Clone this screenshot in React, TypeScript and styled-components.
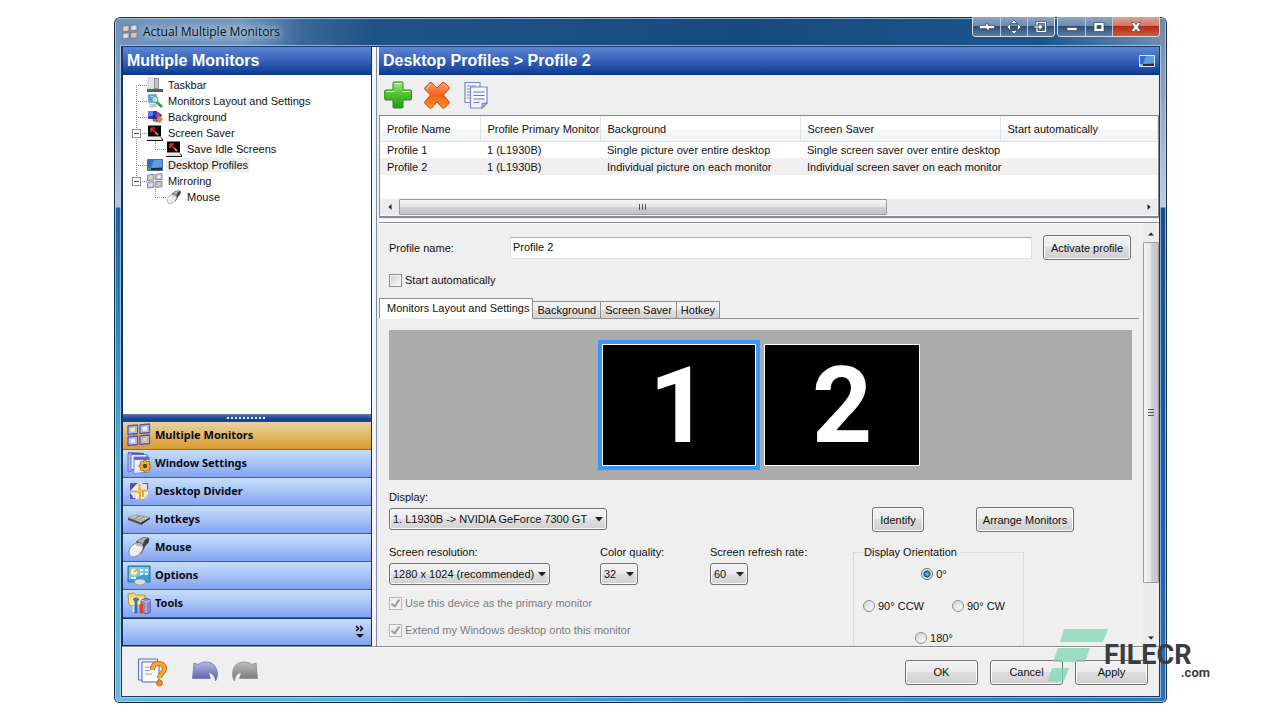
import React, { useState } from "react";
import styled, { createGlobalStyle, css } from "styled-components";

const GlobalStyle = createGlobalStyle`
  *, *::before, *::after { box-sizing: border-box; }
  body {
    margin: 0;
    background: #fff;
    color: #111;
    font: 11px/14px "Liberation Sans", Arial, sans-serif;
  }
  button, input, select { font: inherit; color: inherit; margin: 0; }
`;

const Page = styled.div`
  display: flex;
  height: 100vh;
  padding: 17px 113px 17px 114px;
`;

/* ---------- window frame ---------- */

const Window = styled.div`
  position: relative;
  flex: 1;
  min-width: 0;
  display: flex;
  flex-direction: column;
  padding: 0 7px 6px;
  border-radius: 6px 6px 5px 5px;
  box-shadow: inset 0 0 0 1px #12304f, inset 0 0 0 2px rgba(190, 220, 240, 0.7);
  background:
    linear-gradient(to bottom, #6e8fb5 0, #b5c6d8 190px, #1d64a4 191px, #2f83ba 300px, #4fadd0 440px, #6db9da 100%) left / 7px 100% no-repeat,
    linear-gradient(to bottom, #6e87a5 0, #c0cedd 190px, #174f8c 191px, #1f5f9f 500px, #2e70b0 100%) right / 7px 100% no-repeat,
    linear-gradient(to right, #6db9da 0, #58b2d8 25%, #4394cc 50%, #2f78bc 100%) bottom / 100% 7px no-repeat,
    linear-gradient(to right, #6f92b8 0, #7396bb 130px, #3a6798 190px, #1f5288 260px, #174a80 60%, #1c548c 88%, #7390af 100%);
`;

const TitleBar = styled.header`
  display: flex;
  align-items: flex-start;
  height: 29px;
  padding-left: 1px;
`;

const WindowTitle = styled.h1`
  flex: 1;
  display: flex;
  align-items: center;
  gap: 5px;
  margin: 0;
  padding-top: 6px;
  font: 12px/18px "Open Sans", sans-serif;
  color: #0a1420;
  text-shadow: 0 0 6px #b9cde2, 0 0 8px #b9cde2, 0 0 10px #b9cde2;
`;

const CaptionGroup = styled.div`
  display: flex;
  height: 20px;
  margin-right: 2px;
  border: 1px solid #d3deea;
  border-top: 0;
  border-radius: 0 0 4px 4px;
  overflow: hidden;
  &:last-child { margin-right: 0; }
`;

const CaptionButton = styled.button<{ $close?: boolean }>`
  display: grid;
  place-items: center;
  width: ${(p) => (p.$close ? 47 : 27)}px;
  padding: 0;
  border: 0;
  border-left: 1px solid #b9c8d9;
  background: ${(p) =>
    p.$close
      ? "linear-gradient(#dba596 0, #cf7868 45%, #b32c17 50%, #cf5a3b 100%)"
      : "linear-gradient(#8ea6c1 0, #6f8cad 45%, #2e5078 50%, #5c7fa6 100%)"};
  &:first-child { border-left: 0; }
`;

const Client = styled.div`
  flex: 1;
  min-height: 0;
  display: flex;
  flex-direction: column;
  border: 1px solid #17386b;
  box-shadow: 0 0 0 1px rgba(190, 212, 235, 0.7);
  background: #efefef;
`;

const Body = styled.div`
  flex: 1;
  min-height: 0;
  display: flex;
  border-bottom: 1px solid #8a8a8a;
`;

const PanelHeader = styled.div`
  flex: none;
  display: flex;
  align-items: center;
  justify-content: space-between;
  height: 28px;
  padding: 0 4px;
  border-bottom: 1px solid #0d3379;
  background: linear-gradient(#5c86d3 0, #3a66bb 45%, #17449c 90%, #0d3a90 100%);
`;

const PanelTitle = styled.h2`
  margin: 0;
  font: bold 16px/20px "Liberation Sans", Arial, sans-serif;
  color: #fff;
`;

/* ---------- sidebar ---------- */

const Sidebar = styled.aside`
  flex: none;
  display: flex;
  flex-direction: column;
  width: 250px;
  border: solid #14306c;
  border-width: 0 1px 0 1px;
  background: #fff;
`;

const Tree = styled.ul`
  flex: 1;
  margin: 0;
  padding: 2px 0 0;
  list-style: none;
`;

const TreeRow = styled.li`
  display: flex;
  align-items: center;
  height: 16px;
`;

const TreeLabel = styled.span<{ $selected?: boolean }>`
  margin-left: 3px;
  padding: 0 2px;
  background: ${(p) => (p.$selected ? "#efefef" : "transparent")};
`;

const Splitter = styled.div`
  display: grid;
  place-items: center;
  height: 8px;
  border-bottom: 1px solid #0b5a55;
  background: linear-gradient(#6876ad, #1b4a9a 60%, #103f8d);
`;

const navRow = css`
  display: flex;
  align-items: center;
  height: 28px;
  background: linear-gradient(#c8def9 0, #a9c6f6 45%, #84a2f1 100%);
`;

const NavButton = styled.button<{ $active: boolean }>`
  ${navRow}
  gap: 4px;
  width: 100%;
  padding: 0 0 1px 4px;
  border: 0;
  border-bottom: 1px solid #1b7672;
  font: bold 11px/16px "Noto Sans", sans-serif;
  text-align: left;
  color: #0a0a14;
  ${(p) =>
    p.$active &&
    css`
      background: linear-gradient(#e9d3a2 0, #e2b767 50%, #dc9a31 100%);
      border-bottom-color: #4a8f1c;
    `}
`;

const NavOverflow = styled.div`
  ${navRow}
  justify-content: flex-end;
  padding-right: 6px;
  border-top: 1px solid #14306c;
  border-bottom: 1px solid #14306c;
`;

const IconButton = styled.button`
  display: grid;
  place-items: center;
  padding: 0;
  border: 0;
  background: none;
`;

/* ---------- main panel ---------- */

const Main = styled.main`
  flex: 1;
  min-width: 0;
  display: flex;
  flex-direction: column;
  margin-left: 4px;
  border-left: 1px solid #7c8aa5;
  padding-left: 2px;
  box-shadow: -4px 0 0 #f7f5f3;
`;

const Toolbar = styled.div`
  flex: none;
  display: flex;
  align-items: center;
  gap: 11px;
  height: 40px;
  padding-left: 5px;
`;

const ListBox = styled.section`
  flex: none;
  border: 1px solid #868b92;
  border-bottom-width: 2px;
  background: #fff;
`;

const TableArea = styled.div`
  height: 82px;
`;

const Table = styled.table`
  width: 100%;
  table-layout: fixed;
  border-collapse: collapse;
`;

const HeadCell = styled.th<{ $width?: number }>`
  width: ${(p) => (p.$width ? `${p.$width}px` : "auto")};
  height: 25px;
  padding: 1px 0 0 7px;
  border: solid #e0e3e8;
  border-width: 0 1px 1px 0;
  background: linear-gradient(#fff 50%, #f6f7f9 55%, #f3f4f6);
  font-weight: normal;
  text-align: left;
  white-space: nowrap;
`;

const Row = styled.tr<{ $selected?: boolean }>`
  background: ${(p) => (p.$selected ? "#f0f0f0" : "#fff")};
`;

const Cell = styled.td`
  height: 17px;
  padding: 0 0 0 7px;
  white-space: nowrap;
`;

const HScroll = styled.div`
  display: flex;
  height: 18px;
  border-top: 1px solid #f8f8f8;
  border-bottom: 1px solid #f8f8f8;
  background: #ececec;
`;

const ScrollEnd = styled.span<{ $vertical?: boolean }>`
  flex: none;
  display: grid;
  place-items: center;
  width: ${(p) => (p.$vertical ? 16 : 19)}px;
  height: 16px;
`;

const Track = styled.div<{ $vertical?: boolean }>`
  flex: 1;
  display: flex;
  flex-direction: ${(p) => (p.$vertical ? "column" : "row")};
`;

const Thumb = styled.div<{ $size: number; $vertical?: boolean }>`
  flex: 0 0 ${(p) => p.$size}%;
  display: grid;
  place-items: center;
  border: 1px solid #9a9a9a;
  border-radius: 1px;
  background: linear-gradient(
    ${(p) => (p.$vertical ? "to right" : "to bottom")},
    #f4f4f4 0, #e6e6e8 45%, #cfcfd2 55%, #c2c2c6 100%
  );
`;

const FormPanel = styled.section`
  flex: 1;
  min-height: 0;
  display: flex;
  margin-top: 4px;
  border-top: 1px solid #8f9296;
  box-shadow: 0 -3px 0 #fbfbfb, inset 0 1px 0 #fafafa;
  overflow: hidden;
`;

const Form = styled.form`
  flex: 1;
  min-width: 0;
  padding: 12px 4px 0 0;
`;

const VScroll = styled.div`
  flex: none;
  display: flex;
  flex-direction: column;
  width: 16px;
  padding: 3px 0 0;
  background: #ececec;
`;

const NameRow = styled.div`
  display: flex;
  align-items: center;
  padding: 0 8px 0 10px;
`;

const NameLabel = styled.label`
  width: 121px;
`;

const NameInput = styled.input`
  flex: 1;
  min-width: 0;
  height: 22px;
  margin-right: 11px;
  padding: 0 2px 1px;
  border: 1px solid #e2e3ea;
  border-top-color: #abadb3;
  background: #fff;
`;

const PushButton = styled.button<{ $width: number }>`
  width: ${(p) => p.$width}px;
  height: 25px;
  padding: 0;
  border: 1px solid #707070;
  border-radius: 3px;
  box-shadow: inset 0 0 0 1px #fcfcfc;
  background: linear-gradient(#f2f2f2 0, #ebebeb 48%, #dddddd 50%, #cfcfcf 100%);
  white-space: nowrap;
`;

const CheckLabel = styled.label<{ $muted?: boolean }>`
  display: flex;
  align-items: center;
  gap: 3px;
  height: 14px;
  color: ${(p) => (p.$muted ? "#7d7d7d" : "inherit")};
`;

const CheckBox = styled.input`
  appearance: none;
  display: grid;
  place-items: center;
  width: 13px;
  height: 13px;
  border: 1px solid #8e8f8f;
  background: linear-gradient(135deg, #cfd2d6, #f6f6f6);
  box-shadow: inset 0 0 0 1px #f4f4f4;
  &:disabled {
    border-color: #b4b4b4;
    background: #f0f0f0;
  }
  &:checked::after {
    content: "";
    width: 5px;
    height: 9px;
    margin-bottom: 2px;
    border: solid #9c9c9c;
    border-width: 0 2px 2px 0;
    transform: rotate(35deg);
  }
`;

const StartRow = styled.div`
  padding: 13px 0 0 10px;
`;

const TabBar = styled.div`
  display: flex;
  align-items: flex-end;
  height: 21px;
  margin-top: 11px;
  box-shadow: inset 0 -1px 0 #8c8e91;
`;

const Tab = styled.button<{ $active: boolean }>`
  height: ${(p) => (p.$active ? 21 : 18)}px;
  padding: ${(p) => (p.$active ? "0 3px 1px 7px" : "0 4px")};
  border: 1px solid #8c8e91;
  border-left-width: ${(p) => (p.$active ? 1 : 0)}px;
  border-bottom-color: ${(p) => (p.$active ? "#fff" : "#8c8e91")};
  background: ${(p) => (p.$active ? "#fff" : "linear-gradient(#f0f0f0 45%, #dcdcdc 55%, #d2d2d2)")};
  white-space: nowrap;
`;

const Canvas = styled.div`
  display: flex;
  justify-content: center;
  align-items: center;
  gap: 4px;
  height: 150px;
  margin: 11px 7px 0 10px;
  padding-right: 3px;
  background: #ababab;
`;

const MonitorTile = styled.button<{ $active: boolean }>`
  display: grid;
  place-items: center;
  width: ${(p) => (p.$active ? 162 : 156)}px;
  height: ${(p) => (p.$active ? 130 : 122)}px;
  padding: 3px 0 0;
  border: ${(p) => (p.$active ? "4px solid #3399ff" : "0 solid")};
  background: #000;
  box-shadow: inset 0 0 0 1px #fff;
  font: bold 105px/119px Roboto, Arial, sans-serif;
  color: #fff;
`;

const Settings = styled.div`
  display: grid;
  grid-template-columns: 211px 110px 143px 1fr;
  grid-template-rows: auto auto auto auto 1fr;
  align-items: start;
  padding: 10px 0 0 10px;
`;

const Field = styled.div<{ $span?: number }>`
  grid-column: span ${(p) => p.$span ?? 1};
  display: flex;
  flex-direction: column;
  align-items: flex-start;
  gap: 4px;
  padding-bottom: ${(p) => (p.$span ? 15 : 11)}px;
  white-space: nowrap;
`;

const Picker = styled.span<{ $width: number }>`
  display: grid;
  align-items: center;
  width: ${(p) => p.$width}px;
  > * { grid-area: 1 / 1; }
  > svg { justify-self: end; margin-right: 3px; pointer-events: none; }
`;

const Select = styled.select`
  appearance: none;
  width: 100%;
  height: 22px;
  padding: 0 12px 0 3px;
  border: 1px solid #707070;
  border-radius: 3px;
  box-shadow: inset 0 0 0 1px #fafafa;
  background: linear-gradient(#f2f2f2 0, #ebebeb 48%, #dedede 50%, #d2d2d2 100%);
`;

const MonitorActions = styled.div`
  display: flex;
  gap: 52px;
  padding: 17px 0 0 19px;
`;

const Orientation = styled.fieldset`
  grid-column: 4;
  grid-row: 2 / span 4;
  width: 171px;
  height: 115px;
  min-width: 0;
  margin: 0;
  padding: 8px 18px 0 9px;
  border: 1px solid #d9dde3;
`;

const Legend = styled.legend`
  padding: 0 4px 0 1px;
`;

const RadioRow = styled.div<{ $split?: boolean }>`
  display: flex;
  justify-content: ${(p) => (p.$split ? "space-between" : "center")};
  margin-bottom: 18px;
`;

const RadioLabel = styled.label`
  display: flex;
  align-items: center;
  gap: 3px;
  height: 14px;
  white-space: nowrap;
`;

const Radio = styled.input`
  appearance: none;
  width: 12px;
  height: 12px;
  border: 1px solid #8e8f8f;
  border-radius: 50%;
  background: linear-gradient(135deg, #d2d5d8, #fbfbfb);
  &:checked {
    border-color: #5b6a7a;
    background: radial-gradient(circle, #4fc0e8 0 1px, #14506f 3px, #10344a 3px, #eef2f5 4px);
  }
`;

const CheckRow = styled.div`
  grid-column: 1 / span 3;
  padding-bottom: 13px;
`;

/* ---------- footer ---------- */

const Footer = styled.footer`
  flex: none;
  display: flex;
  align-items: center;
  height: 49px;
  padding: 0 11px 0 15px;
  border-top: 1px solid #fafafa;
`;

const HistoryButtons = styled.div`
  flex: 1;
  display: flex;
  gap: 12px;
  margin-left: 24px;
`;

const DialogButtons = styled.div`
  display: flex;
  gap: 12px;
`;

const Watermark = styled.div`
  position: absolute;
  right: -43px;
  bottom: 20px;
  display: flex;
  pointer-events: none;
  color: #3b3c3f;
  font-family: Roboto, sans-serif;
  font-weight: bold;
`;

const WatermarkText = styled.div`
  display: flex;
  flex-direction: column;
  width: 106px;
  margin-left: -4px;
  padding-top: 12px;
`;

const WatermarkName = styled.span`
  font-size: 27px;
  line-height: 28px;
`;

const WatermarkSuffix = styled.span`
  align-self: flex-end;
  font-size: 13px;
  line-height: 8px;
`;

/* ---------- drawings ---------- */

const FourMonitors = ({ size = 24, muted = false }: { size?: number; muted?: boolean }) => (
  <svg width={size} height={size} viewBox="0 0 24 24">
    {[
      [1, 2, muted ? "#f3df8e" : "#f7e7a0"],
      [13, 1, muted ? "#eceef8" : "#eef1ff"],
      [1, 13, muted ? "#e9ebf6" : "#e8ecff"],
      [13, 12, muted ? "#f0cc69" : "#f5d271"],
    ].map(([x, y, c], i) => (
      <g key={i}>
        <path
          d={`M${x} ${Number(y) + 1}l9.500-1v8.500l-9.500 1z`}
          fill={muted ? "#d4d4dc" : "#c9cdf0"}
          stroke={muted ? "#74749a" : "#5257a3"}
          strokeWidth="1.300"
          strokeLinejoin="round"
        />
        <path d={`M${Number(x) + 2} ${Number(y) + 2.5}l5.500-.6v5l-5.500 .6z`} fill={String(c)} stroke={muted ? "#a9a9bd" : "#8d8fc6"} strokeWidth=".6" />
      </g>
    ))}
  </svg>
);

const WindowsGear = () => (
  <svg width="24" height="24" viewBox="0 0 24 24">
    <path d="M1 1l16 1v2H1z" fill="#4b55b0" />
    <path d="M1 2h4v18l-4 1z" fill="#a9b1ea" stroke="#5c66bb" strokeWidth=".8" />
    <path d="M4 3.500h16v15H4z" fill="#dfe6fb" stroke="#5c66bb" strokeWidth=".8" />
    <path d="M7 6h15v15L7 22.500z" fill="#eaf0ff" stroke="#6a74c4" strokeWidth=".8" />
    <path d="M7 6h15v3H7z" fill="#5f6bd0" />
    <path d="M17 9h2l.5 2 2-1 1.500 1.500-1 2 2 .5v2l-2 .5 1 2-1.500 1.500-2-1-.5 2h-2l-.5-2-2 1-1.500-1.500 1-2-2-.5v-2l2-.5-1-2 1.500-1.500 2 1z" fill="#eeb52a" stroke="#8a5a06" strokeWidth=".7" />
    <circle cx="18" cy="15" r="2.200" fill="#5a3d08" />
  </svg>
);

const DividerIcon = () => (
  <svg width="24" height="24" viewBox="0 0 24 24">
    <path d="M4 4h17v16H4z" fill="#f1f1f4" />
    <path d="M3 4h8L3 12zM21 4v7l-6-7zM3 20v-6l6 6z" fill="#5158ad" />
    <path d="M5 11l5-6 3 2v5H7z" fill="#f9efcf" />
    <path d="M14 5h6v5h-6z" fill="#dfe3f5" />
    <path d="M14 12h7v4l-5 1z" fill="#faf3da" />
    <path d="M12.500 5v6.500M4 12.500h7.500M11 13.500h2v6.500M13.500 11.500H21M16 12v6" fill="none" stroke="#e6ac35" strokeWidth="2.200" />
    <path d="M5 15h4v4H6z" fill="#d8dcf2" />
    <path d="M21 20v-5l-5 5z" fill="#b9bee4" />
  </svg>
);

const KeyboardIcon = () => (
  <svg width="24" height="24" viewBox="0 0 24 24">
    <path d="M1 10.500L9 8l14 2.500-9 5z" fill="#e5e5e3" stroke="#77777a" strokeWidth=".6" />
    <path d="M1 10.500l13 5v2.500L1 13z" fill="#55565a" />
    <path d="M14 15.500l9-5V12l-9 6z" fill="#303135" />
    <path d="M4 10.500l12 3.400M6.500 9.700l12 3M9 8.900l12 2.300M7 12.700l6-4M11 14l6-4.200" stroke="#8d8e90" strokeWidth=".9" />
  </svg>
);

const MouseIcon = ({ size = 24 }: { size?: number }) => (
  <svg width={size} height={size} viewBox="0 0 24 24">
    <path d="M9 7c3-4 9-6 13-4 1 3-1 6-3 7l-5 9z" fill="#3f4047" />
    <path d="M10 6c3-3 8-4 12-3-3 0-5 2-6 6z" fill="#aeb0b6" />
    <path d="M2 17c0-4 4-9 9-9 4 0 5 2 5 5-1 5-6 9-10 9-3 0-4-2-4-5z" fill="#ececed" stroke="#7d7e83" strokeWidth=".8" />
    <path d="M7 10l9 2-3-4z" fill="#b7b8bd" />
    <path d="M4 16c1-3 3-5 5-5" stroke="#fff" strokeWidth="1.600" fill="none" />
  </svg>
);

const OptionsIcon = () => (
  <svg width="24" height="24" viewBox="0 0 24 24">
    <path d="M1 3h22v16H1z" fill="#3f9fd0" stroke="#2476a8" />
    <path d="M2 4h20v6L2 16z" fill="#7cc7e8" />
    <circle cx="7" cy="9" r="3.500" fill="#e9f6fb" stroke="#e7c65a" strokeWidth="1.300" />
    <path d="M7 9l3-2" stroke="#d88d2b" strokeWidth="1.500" />
    <path d="M13 7h3M18 7h3M13 11h3M18 11h3M4 15h5" stroke="#eafaff" strokeWidth="1.800" />
    <ellipse cx="13" cy="19" rx="5.500" ry="3" fill="#dcdde0" stroke="#8c9095" strokeWidth=".7" />
  </svg>
);

const ToolsIcon = () => (
  <svg width="24" height="24" viewBox="0 0 24 24">
    <path d="M1 3l6-1 2 2h9v10H2z" fill="#f1d765" stroke="#a98a25" strokeWidth=".8" />
    <path d="M2 7h15v7H3z" fill="#f8e793" />
    <path d="M14 9l5-2 5 2v12l-5 2-5-2z" fill="#8b85c4" stroke="#4f4a8a" strokeWidth=".7" />
    <path d="M19 11v11M14 9l5 2 5-2" stroke="#c9c5ec" fill="none" />
    <path d="M6 8.500c2-2 5-2 6 0l-2 1.500v12H8V10z" fill="#4e78b4" stroke="#2d4b78" strokeWidth=".6" />
    <path d="M12.500 13h3.500v9l-3.500 .5z" fill="#d8442c" />
    <path d="M6.500 12v9" stroke="#e8e8e8" strokeWidth="1.300" />
  </svg>
);

const TaskbarIcon = () => (
  <svg width="16" height="16" viewBox="0 0 16 16">
    <path d="M1 1h7v11H1z" fill="#e4e4e4" stroke="#bdbdbd" strokeWidth=".6" />
    <path d="M7 1h5v12H7z" fill="#8f9194" />
    <path d="M8 2h3v9H8z" fill="#c4c6c8" />
    <path d="M0 12h16v3H0z" fill="#56585b" />
    <path d="M1 13h5M8 13h2" stroke="#2f9a48" />
  </svg>
);

const LayoutIcon = () => (
  <svg width="16" height="16" viewBox="0 0 16 16">
    <path d="M1 2l8-1 1 8-8 1z" fill="#4aa3d8" stroke="#8bb0c5" />
    <path d="M2.500 3.500l5-.7.4 3z" fill="#a8dcf4" />
    <path d="M2 11.500l7-1.500 1 4-7 1z" fill="#c7cbd0" />
    <circle cx="8" cy="6.500" r="3" fill="#b9e6f2" stroke="#5f9fc0" />
    <path d="M9.500 9l5.500 5" stroke="#3aa047" strokeWidth="3" />
  </svg>
);

const BackgroundIcon = () => (
  <svg width="16" height="16" viewBox="0 0 16 16">
    <path d="M1 2h9v8H1z" fill="#2c3fc7" />
    <path d="M1 2h5v5H1z" fill="#5b83ee" />
    <path d="M5 7l6-4 4 3-3 7-6-1z" fill="#2b2f7a" />
    <path d="M8 5.500l4-2 2 4-4 2z" fill="#b83a8a" />
    <path d="M9.500 10.500l3-4 3.500 4-3.500 4z" fill="#e2842e" />
    <path d="M6 10h4l-1 4z" fill="#4fae57" />
  </svg>
);

const ScreenSaverIcon = () => (
  <svg width="16" height="16" viewBox="0 0 16 16">
    <path d="M1 .5h13v11H1z" fill="#0a0000" />
    <path d="M4 3l5 5M4 3v4M4 3h4" stroke="#e5321e" strokeWidth="1.500" />
    <path d="M8.500 7.500l2.500 2.500" stroke="#f0c22c" strokeWidth="1.500" />
    <path d="M1 12.500h12.500l2 2.500H.5z" fill="#e0e0e0" />
    <path d="M0 15.500h16M14 12.500l2 2.500" stroke="#111" />
  </svg>
);

const DesktopIcon = ({ framed = false }: { framed?: boolean }) => (
  <svg width="16" height="16" viewBox="0 0 16 16">
    <path d="M.5 2.500h15v11H.5z" fill="#3070c8" stroke={framed ? "#dce6f5" : "#4a6c96"} />
    <path d="M7 3h8v7L4 11z" fill="#5f9be0" />
    <path d="M1 11h14v2H1z" fill="#1d2f4d" />
    <path d="M1 11h3v2H1z" fill={framed ? "#8fb0d8" : "#49a55b"} />
  </svg>
);

type GuideKind = "root-first" | "root" | "box" | "child" | "box-last" | "child-last";

const Guide = ({ kind }: { kind: GuideKind }) => {
  const child = kind.startsWith("child");
  const box = kind.startsWith("box");
  const top = kind === "root-first" ? 8 : 0;
  const bottom = kind === "box-last" ? 8 : 16;
  return (
    <svg width={child ? 43 : 24} height="16" fill="none" shapeRendering="crispEdges">
      {kind !== "child-last" && <path d={`M13.500 ${top}V${bottom}`} stroke="#8f8f8f" strokeDasharray="1 1" />}
      {!child && <path d="M13 8.500h11" stroke="#8f8f8f" strokeDasharray="1 1" />}
      {child && <path d="M32.500 0v8.500h10" stroke="#8f8f8f" strokeDasharray="1 1" />}
      {box && (
        <>
          <path d="M9.500 4.500h8v8h-8z" fill="#fff" stroke="#919191" />
          <path d="M11 8.500h5" stroke="#33477a" />
        </>
      )}
    </svg>
  );
};

const Arrow = ({ dir, small = false }: { dir: "up" | "down" | "left" | "right"; small?: boolean }) => {
  const angle = { down: 0, left: 90, up: 180, right: 270 }[dir];
  return (
    <svg width="10" height="10" viewBox="0 0 10 10">
      <path d={small ? "M2 3.500h6L5 6.500z" : "M1 3h8L5 7.500z"} fill="#222" transform={`rotate(${angle} 5 5)`} />
    </svg>
  );
};

const Grip = ({ vertical = false }: { vertical?: boolean }) => (
  <svg width="8" height="8" viewBox="0 0 8 8" shapeRendering="crispEdges">
    <path d={vertical ? "M1 .5h6M1 3.500h6M1 6.500h6" : "M.5 1v6M3.500 1v6M6.500 1v6"} stroke="#555" />
  </svg>
);

const Dots = () => (
  <svg width="40" height="3" viewBox="0 0 40 3" shapeRendering="crispEdges">
    <path d="M0 2h40" stroke="#e6ecf8" strokeWidth="2" strokeDasharray="2 2" />
  </svg>
);

const AddIcon = () => (
  <svg width="28" height="28" viewBox="0 0 28 28">
    <defs>
      <linearGradient id="add" x1="0" y1="0" x2="0" y2="1">
        <stop offset="0" stopColor="#a6e87e" />
        <stop offset=".5" stopColor="#4cc02e" />
        <stop offset="1" stopColor="#249a16" />
      </linearGradient>
    </defs>
    <path d="M10 1h8q1 0 1 1v7h7q1.500 0 1.500 1v8q0 1-1.500 1h-7v7q0 1-1 1h-8q-1 0-1-1v-7H2Q.7 19 .7 18v-8q0-1 1.300-1h7V2q0-1 1-1z" fill="url(#add)" stroke="#2b8a1c" />
    <path d="M10.500 2.500h7M2.500 10.500h8M19 10.500h6.500" stroke="#d6f7c0" />
  </svg>
);

const DeleteIcon = () => (
  <svg width="28" height="28" viewBox="0 0 28 28">
    <defs>
      <linearGradient id="del" x1="0" y1="0" x2="0" y2="1">
        <stop offset="0" stopColor="#ff9d5e" />
        <stop offset=".5" stopColor="#f0621f" />
        <stop offset="1" stopColor="#fb951c" />
      </linearGradient>
    </defs>
    <path d="M7 1.500q1-.5 2 .5l5 5 5-5q1-1 2-.5l5 4.500q.8 1 0 2l-5.500 6 5.500 6.500q.8 1 0 2l-4.500 4.500q-1 .8-2 0L14 21l-5.500 6q-1 .8-2 0L2 22.500q-.8-1 0-2L7.500 14 2 8.500q-.8-1 0-2z" fill="url(#del)" stroke="#c8481a" strokeLinejoin="round" />
    <path d="M3.500 8l4-4.500M20.500 3.500l4 3.500" stroke="#ffd0a8" />
  </svg>
);

const CopyIcon = () => (
  <svg width="28" height="28" viewBox="0 0 28 28" fill="#f3f6ff" stroke="#7d84cf" strokeWidth="1.200">
    <path d="M3 1.500h15v20H3z" />
    <path d="M5 5h9M5 8h3M5 11h3M5 14h3M5 17h3" />
    <path d="M8.500 6h16.500v16l-5 5H8.500z" />
    <path d="M11.500 11h11M11.500 14.500h11M11.500 18h11M11.500 21.500h6" stroke="#6a72c8" />
    <path d="M25 22l-5 5v-4.500z" fill="#b9bff0" />
  </svg>
);

const HelpIcon = () => (
  <svg width="30" height="30" viewBox="0 0 30 30">
    <path d="M1.500 2h19v21h-19z" fill="#e8edff" stroke="#6168bd" />
    <path d="M5 5h17v20H5z" fill="#fff" stroke="#5a61b8" />
    <path d="M8 10h6M8 13.500h5M8 17h7" stroke="#8f96d6" />
    <path d="M15.500 13c0-4.500 2.500-6.500 6-6.500s6 2.200 6 5.300c0 4.500-5 4.200-5 9.200" fill="none" stroke="#b8620e" strokeWidth="5" />
    <path d="M15.500 13c0-4.500 2.500-6.500 6-6.500s6 2.200 6 5.300c0 4.500-5 4.200-5 9.200" fill="none" stroke="#fba82a" strokeWidth="3.500" />
    <circle cx="22.500" cy="26" r="3" fill="#f58a1c" stroke="#b8620e" strokeWidth=".8" />
  </svg>
);

const HistoryIcon = ({ redo = false }: { redo?: boolean }) => (
  <svg width="28" height="24" viewBox="0 0 28 24">
    <defs>
      <linearGradient id={redo ? "redo" : "undo"} x1="0" y1="0" x2="0" y2="1">
        <stop offset="0" stopColor={redo ? "#bdbdbd" : "#b9b9e2"} />
        <stop offset="1" stopColor={redo ? "#747474" : "#5653a3"} />
      </linearGradient>
    </defs>
    <path
      transform={redo ? "matrix(-1 0 0 1 28 0)" : undefined}
      d="M3 3l4 1.500C11 1.500 19 .8 23 5c4 4.500 4.500 11 1.500 16-.4-5-3-8-7-8.500l2 6H1.500z"
      fill={`url(#${redo ? "redo" : "undo"})`}
      stroke={redo ? "#8a8a8a" : "#7573b8"}
      strokeWidth=".8"
    />
  </svg>
);

const ChevronsIcon = () => (
  <svg width="10" height="14" viewBox="0 0 10 14" fill="none" stroke="#0a0a14" strokeWidth="1.500">
    <path d="M1 1l2.500 2.500L1 6M5 1l2.500 2.500L5 6" />
    <path d="M1 9h8l-4 4z" fill="#0a0a14" stroke="none" />
  </svg>
);

const CaptionGlyph = ({ kind }: { kind: string }) => (
  <svg width="16" height="14" viewBox="0 0 16 14" fill="#fff" stroke="#35485f" strokeWidth=".7">
    {kind === "rollup" && <path d="M.5 5.500h6V4h3v1.500h6v3H10V10H7.500V8.500h-7z" />}
    {kind === "move" && <path d="M8 0l3.500 3.500h-7zM8 14l3.500-3.500h-7zM1 7l3.500-3.500v7zM15 7l-3.500-3.500v7z" />}
    {kind === "send" && (
      <>
        <path d="M3 1.500h10.500v11H3zM5 3.500v7h6.500v-7z" fillRule="evenodd" />
        <path d="M1 6h5V3.500L10 7l-4 3.500V8H1z" />
      </>
    )}
    {kind === "min" && <path d="M3 7.500h10v3H3z" />}
    {kind === "max" && <path d="M3 2.500h10v9H3zM6 5.500v3h4v-3z" fillRule="evenodd" />}
    {kind === "close" && <path d="M3 2.500h3.200L8 4.800l1.800-2.300H13L9.900 7l3.100 4.500H9.800L8 9.200l-1.800 2.300H3L6.100 7z" />}
  </svg>
);

const WatermarkLogo = () => (
  <svg width="60" height="54" viewBox="0 0 60 54" fill="#7fd6b4" fillOpacity=".75">
    <path d="M16 0h44l-5 13H12zM10 19h32l-5 14H5zM4 39h17l-5 13H0z" />
  </svg>
);

/* ---------- data ---------- */

const tree: { label: string; guide: GuideKind; icon: React.ReactNode; selected?: boolean }[] = [
  { label: "Taskbar", guide: "root-first", icon: <TaskbarIcon /> },
  { label: "Monitors Layout and Settings", guide: "root", icon: <LayoutIcon /> },
  { label: "Background", guide: "root", icon: <BackgroundIcon /> },
  { label: "Screen Saver", guide: "box", icon: <ScreenSaverIcon /> },
  { label: "Save Idle Screens", guide: "child", icon: <ScreenSaverIcon /> },
  { label: "Desktop Profiles", guide: "root", icon: <DesktopIcon />, selected: true },
  { label: "Mirroring", guide: "box-last", icon: <FourMonitors size={16} muted /> },
  { label: "Mouse", guide: "child-last", icon: <MouseIcon size={16} /> },
];

const sections = [
  { label: "Multiple Monitors", icon: <FourMonitors /> },
  { label: "Window Settings", icon: <WindowsGear /> },
  { label: "Desktop Divider", icon: <DividerIcon /> },
  { label: "Hotkeys", icon: <KeyboardIcon /> },
  { label: "Mouse", icon: <MouseIcon /> },
  { label: "Options", icon: <OptionsIcon /> },
  { label: "Tools", icon: <ToolsIcon /> },
];

const columns = [
  { label: "Profile Name", width: 100 },
  { label: "Profile Primary Monitor", width: 120 },
  { label: "Background", width: 200 },
  { label: "Screen Saver", width: 200 },
  { label: "Start automatically" },
];

const profiles = [
  ["Profile 1", "1 (L1930B)", "Single picture over entire desktop", "Single screen saver over entire desktop", ""],
  ["Profile 2", "1 (L1930B)", "Individual picture on each monitor", "Individual screen saver on each monitor", ""],
];

const tabs = ["Monitors Layout and Settings", "Background", "Screen Saver", "Hotkey"];

function PickField(props: { id: string; label: string; value: string; width: number; span?: number }) {
  return (
    <Field $span={props.span}>
      <label htmlFor={props.id}>{props.label}</label>
      <Picker $width={props.width}>
        <Select id={props.id}>
          <option>{props.value}</option>
        </Select>
        <Arrow dir="down" />
      </Picker>
    </Field>
  );
}

export default function App() {
  const [section, setSection] = useState("Multiple Monitors");
  const [tab, setTab] = useState(tabs[0]);
  const [monitor, setMonitor] = useState(1);
  const [angle, setAngle] = useState("0°");

  const radio = (value: string) => (
    <RadioLabel>
      <Radio type="radio" name="angle" checked={angle === value} onChange={() => setAngle(value)} />
      {value}
    </RadioLabel>
  );

  return (
    <Page>
      <GlobalStyle />
      <Window>
        <TitleBar>
          <WindowTitle>
            <FourMonitors size={16} muted />
            Actual Multiple Monitors
          </WindowTitle>
          <CaptionGroup>
            <CaptionButton aria-label="Roll up"><CaptionGlyph kind="rollup" /></CaptionButton>
            <CaptionButton aria-label="Move"><CaptionGlyph kind="move" /></CaptionButton>
            <CaptionButton aria-label="Send to monitor"><CaptionGlyph kind="send" /></CaptionButton>
          </CaptionGroup>
          <CaptionGroup>
            <CaptionButton aria-label="Minimize"><CaptionGlyph kind="min" /></CaptionButton>
            <CaptionButton aria-label="Maximize"><CaptionGlyph kind="max" /></CaptionButton>
            <CaptionButton aria-label="Close" $close><CaptionGlyph kind="close" /></CaptionButton>
          </CaptionGroup>
        </TitleBar>

        <Client>
          <Body>
            <Sidebar>
              <PanelHeader>
                <PanelTitle>Multiple Monitors</PanelTitle>
              </PanelHeader>
              <Tree>
                {tree.map((item) => (
                  <TreeRow key={item.label}>
                    <Guide kind={item.guide} />
                    {item.icon}
                    <TreeLabel $selected={item.selected}>{item.label}</TreeLabel>
                  </TreeRow>
                ))}
              </Tree>
              <Splitter><Dots /></Splitter>
              <nav>
                {sections.map((s) => (
                  <NavButton key={s.label} $active={section === s.label} onClick={() => setSection(s.label)}>
                    {s.icon}
                    {s.label}
                  </NavButton>
                ))}
              </nav>
              <NavOverflow>
                <IconButton aria-label="More sections"><ChevronsIcon /></IconButton>
              </NavOverflow>
            </Sidebar>

            <Main>
              <PanelHeader>
                <PanelTitle>Desktop Profiles &gt; Profile 2</PanelTitle>
                <DesktopIcon framed />
              </PanelHeader>
              <Toolbar>
                <IconButton aria-label="Add profile"><AddIcon /></IconButton>
                <IconButton aria-label="Delete profile"><DeleteIcon /></IconButton>
                <IconButton aria-label="Copy profile"><CopyIcon /></IconButton>
              </Toolbar>

              <ListBox>
                <TableArea>
                  <Table>
                    <thead>
                      <tr>
                        {columns.map((c) => (
                          <HeadCell key={c.label} $width={c.width}>{c.label}</HeadCell>
                        ))}
                      </tr>
                    </thead>
                    <tbody>
                      {profiles.map((cells, i) => (
                        <Row key={cells[0]} $selected={i === 1}>
                          {cells.map((text, j) => (
                            <Cell key={j}>{text}</Cell>
                          ))}
                        </Row>
                      ))}
                    </tbody>
                  </Table>
                </TableArea>
                <HScroll>
                  <ScrollEnd><Arrow dir="left" small /></ScrollEnd>
                  <Track><Thumb $size={66}><Grip /></Thumb></Track>
                  <ScrollEnd><Arrow dir="right" small /></ScrollEnd>
                </HScroll>
              </ListBox>

              <FormPanel>
                <Form onSubmit={(e) => e.preventDefault()}>
                  <NameRow>
                    <NameLabel htmlFor="profile-name">Profile name:</NameLabel>
                    <NameInput id="profile-name" defaultValue="Profile 2" />
                    <PushButton type="button" $width={88}>Activate profile</PushButton>
                  </NameRow>
                  <StartRow>
                    <CheckLabel>
                      <CheckBox type="checkbox" />
                      Start automatically
                    </CheckLabel>
                  </StartRow>
                  <TabBar role="tablist">
                    {tabs.map((t) => (
                      <Tab key={t} type="button" role="tab" aria-selected={tab === t} $active={tab === t} onClick={() => setTab(t)}>
                        {t}
                      </Tab>
                    ))}
                  </TabBar>
                  <Canvas>
                    {[1, 2].map((n) => (
                      <MonitorTile key={n} type="button" $active={monitor === n} onClick={() => setMonitor(n)}>
                        {n}
                      </MonitorTile>
                    ))}
                  </Canvas>
                  <Settings>
                    <PickField id="display" label="Display:" value="1. L1930B -> NVIDIA GeForce 7300 GT" width={218} span={3} />
                    <MonitorActions>
                      <PushButton type="button" $width={52}>Identify</PushButton>
                      <PushButton type="button" $width={98}>Arrange Monitors</PushButton>
                    </MonitorActions>
                    <PickField id="resolution" label="Screen resolution:" value="1280 x 1024 (recommended)" width={161} />
                    <PickField id="quality" label="Color quality:" value="32" width={38} />
                    <PickField id="rate" label="Screen refresh rate:" value="60" width={38} />
                    <Orientation>
                      <Legend>Display Orientation</Legend>
                      <RadioRow>{radio("0°")}</RadioRow>
                      <RadioRow $split>{radio("90° CCW")}{radio("90° CW")}</RadioRow>
                      <RadioRow>{radio("180°")}</RadioRow>
                    </Orientation>
                    <CheckRow>
                      <CheckLabel $muted>
                        <CheckBox type="checkbox" checked disabled readOnly />
                        Use this device as the primary monitor
                      </CheckLabel>
                    </CheckRow>
                    <CheckRow>
                      <CheckLabel $muted>
                        <CheckBox type="checkbox" checked disabled readOnly />
                        Extend my Windows desktop onto this monitor
                      </CheckLabel>
                    </CheckRow>
                  </Settings>
                </Form>
                <VScroll>
                  <ScrollEnd $vertical><Arrow dir="up" small /></ScrollEnd>
                  <Track $vertical><Thumb $size={88} $vertical><Grip vertical /></Thumb></Track>
                  <ScrollEnd $vertical><Arrow dir="down" small /></ScrollEnd>
                </VScroll>
              </FormPanel>
            </Main>
          </Body>

          <Footer>
            <IconButton aria-label="Help"><HelpIcon /></IconButton>
            <HistoryButtons>
              <IconButton aria-label="Undo"><HistoryIcon /></IconButton>
              <IconButton aria-label="Redo"><HistoryIcon redo /></IconButton>
            </HistoryButtons>
            <DialogButtons>
              <PushButton $width={73}>OK</PushButton>
              <PushButton $width={73}>Cancel</PushButton>
              <PushButton $width={73}>Apply</PushButton>
            </DialogButtons>
          </Footer>
        </Client>

        <Watermark>
          <WatermarkLogo />
          <WatermarkText>
            <WatermarkName>FILECR</WatermarkName>
            <WatermarkSuffix>.com</WatermarkSuffix>
          </WatermarkText>
        </Watermark>
      </Window>
    </Page>
  );
}
